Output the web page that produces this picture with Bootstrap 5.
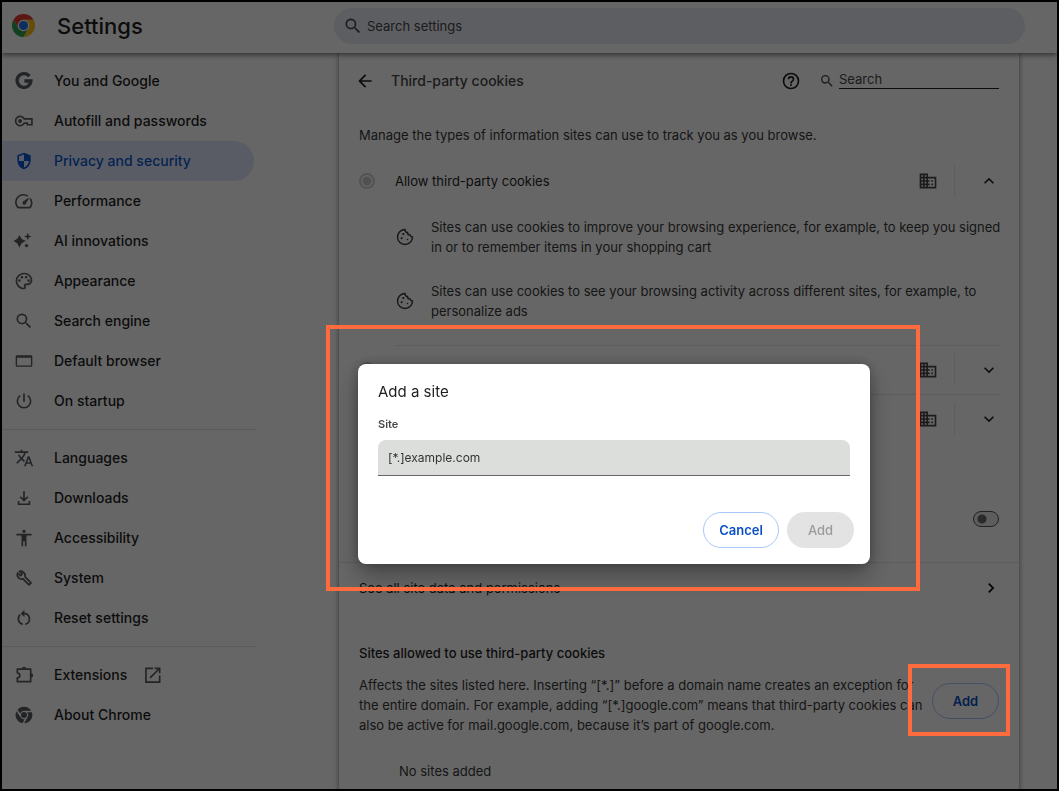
<!DOCTYPE html>
<html lang="en">
<head>
<meta charset="utf-8">
<meta name="viewport" content="width=device-width, initial-scale=1">
<title>Settings - Third-party cookies</title>
<link href="https://cdn.jsdelivr.net/npm/bootstrap@5.3.0/dist/css/bootstrap.min.css" rel="stylesheet">
<style>
  :root { --ink: #1f1f1f; --muted: #474747; --accent: #0b57d0; --rule: #e9e9e9; --mark: #ff6b3d; }
  body { font-family: Inter, "Liberation Sans", sans-serif; font-size: 13px; line-height: 20px; color: var(--ink); }
  svg { display: block; flex: none; fill: currentColor; }
  .ico { width: 20px; height: 20px; }
  .ln { fill: none; stroke: currentColor; stroke-width: 2; }
  .app-frame { border: 2px solid #000; background: #fff; }

  .topbar { height: 51px; padding: 0 32px 4px 10px; z-index: 2; position: relative; box-shadow: 0 2px 5px rgba(0,0,0,.5); background: #fff; }
  .brand-area { width: 322px; gap: 22px; }
  .brand-area h1 { font-size: 22px; line-height: 28px; font-weight: 500; }
  .omni { height: 36px; background: #e9ebf4; padding: 0 9px; gap: 4px; color: var(--muted); }
  .omni input, .mini-search input { font-size: 13px; line-height: 18px; color: inherit; }
  .omni input::placeholder, .mini-search input::placeholder { color: #474747; opacity: 1; }

  .side { width: 254px; padding-top: 8px; }
  .side .nav-link { height: 40px; padding: 0 12px; gap: 20px; font-size: 14px; font-weight: 500; color: var(--ink); border-radius: 0 20px 20px 0; margin-right: 2px; }
  .side .nav-link svg { color: #565a60; }
  .side .nav-link.active, .side .nav-link.active svg { color: var(--accent); }
  .side .nav-link.active { background: #dfe7fb; }
  .side hr { margin: 8px 0; color: #000; opacity: .12; }

  .main-area { padding-left: 83px; padding-right: 38px; }
  .sheet { box-shadow: 0 0 5px rgba(0,0,0,.5); min-height: 100%; }
  .sheet-head { height: 56px; padding: 0 20px 0 16px; }
  .sheet-head h2 { font-size: 14px; line-height: 20px; font-weight: 500; color: #474747; }
  .mini-search { width: 180px; gap: 4px; margin-left: 18px; color: var(--muted); }
  .mini-search input { border-bottom: 1px solid #1f1f1f !important; height: 20px; margin-bottom: 4px; }
  .intro { padding: 16px 20px 12px; color: #373737; }
  .opt { height: 48px; margin: 0 20px; }
  .opt-rule { margin: 0 20px 0 56px; border-top: 1px solid var(--rule); }
  .opt-tail { height: 32px; border-left: 1px solid var(--rule); padding-left: 24px; margin-left: 16px; }
  .opt .form-check-input { width: 16px; height: 16px; margin: 0 20px 0 0; border: 2px solid #d0d0d0; background: none; opacity: 1; }
  .opt .form-check-input:checked { background: radial-gradient(circle, #cacaca 0 4px, transparent 5px); }
  .opt .form-check-input:disabled ~ label { opacity: 1; }
  .opt button, .sheet-head button { border: 0; background: none; padding: 0; color: var(--ink); }
  .opt .ico { color: #474747; }
  .facts { padding: 12px 12px 24px 56px; gap: 24px; color: #373737; }
  .facts li { gap: 16px; }
  .facts .ln { stroke-width: 1.7; }
  .track-row { height: 120px; padding: 32px 20px 0; border-bottom: 1px solid var(--rule); }
  .track-row .form-check-input { width: 26px; height: 16px; margin: 0; float: none; border: 1px solid #555; background: radial-gradient(circle at 8px 7px, #6a6a6a 0 4px, transparent 5px) #e8e8e8; }
  .all-data { height: 50px; padding: 0 18px 0 20px; color: var(--ink); }
  .all-data svg { color: #000; }
  .allowed { padding: 30px 20px 0; }
  .allowed h3 { font-size: 13px; line-height: 20px; font-weight: 500; margin-bottom: 12px; }
  .allowed p { width: 568px; color: #373737; }
  .none-yet { padding: 26px 0 24px 40px; color: #373737; }
  .pill { height: 36px; border-radius: 18px; font-size: 13px; line-height: 20px; font-weight: 600; padding: 0; }
  .pill-line { color: #0b4fc4; border: 1px solid #a8c7fa; background: transparent; }
  .pill-off, .pill-off:disabled { background: #e3e3e3; color: #9b9b9b; border: 0; opacity: 1; font-weight: 500; }
  .w-add { width: 67px; }
  .w-cancel { width: 76px; }

  .dim { position: fixed; inset: 0; z-index: 10; background: rgba(0,0,0,.6); }
  .dialog-spot { position: fixed; z-index: 20; left: 326px; top: 325px; width: 594px; padding: 39px 50px 27px 32px; }
  .dialog-spot::after, .add-spot { content: ""; position: absolute; inset: 0; border: 4px solid var(--mark); pointer-events: none; }
  .add-spot { z-index: 15; inset: -19px -11px -17px -24px; }
  .ask { border-radius: 8px; background: #fff; padding: 18px 16px 16px 20px; box-shadow: 0 12px 24px rgba(0,0,0,.3), 0 0 12px rgba(0,0,0,.25); }
  .ask h2 { font-size: 15px; line-height: 20px; font-weight: 400; margin: 0 0 12px; }
  .ask label { font-size: 11px; line-height: 20px; font-weight: 600; color: #474747; }
  .ask-body { margin-right: 4px; }
  .site-box { height: 36px; padding: 0 10px; border: 0; border-bottom: 1px solid #666; border-radius: 8px 8px 0 0; background: #dcdedb; font-size: 12px; line-height: 20px; margin: 6px 0 36px; }
  .site-box::placeholder { color: #333; opacity: 1; }
</style>
</head>
<body>
<div class="app-frame vh-100 overflow-hidden d-flex flex-column">
  <header class="topbar d-flex align-items-center flex-shrink-0">
    <div class="brand-area d-flex align-items-center flex-shrink-0">
      <svg width="23" height="23" viewBox="0 0 24 24" aria-hidden="true">
        <path fill="#2ba24c" d="M1.6 6A12 12 0 0 0 12 24l5.2-9L12 12 6.8 15Z"/>
        <path fill="#fbc116" d="M17.2 15 12 24A12 12 0 0 0 22.4 6H12Z"/>
        <path fill="#e33b2e" d="M1.6 6A12 12 0 0 1 22.4 6H12L6.8 15Z"/>
        <circle cx="12" cy="12" r="6" fill="#fff"/><circle cx="12" cy="12" r="4.8" fill="#1a73e8"/>
      </svg>
      <h1 class="m-0">Settings</h1>
    </div>
    <div class="omni rounded-pill flex-grow-1 d-flex align-items-center">
      <svg class="ico" viewBox="0 0 24 24"><path d="M15.500 14h-.79l-.28-.27A6.470 6.470 0 0 0 16 9.500 6.500 6.500 0 1 0 9.500 16c1.610 0 3.090-.59 4.230-1.570l.27.28v.79l5 4.990L20.490 19zm-6 0a4.500 4.500 0 1 1 0-9 4.500 4.500 0 0 1 0 9z"/></svg>
      <input type="search" class="border-0 bg-transparent p-0 flex-grow-1" placeholder="Search settings" aria-label="Search settings">
    </div>
  </header>

  <div class="d-flex flex-grow-1">
    <nav class="side nav flex-column flex-nowrap flex-shrink-0" aria-label="Settings sections">
      <a class="nav-link d-flex align-items-center" href="#"><svg class="ico" viewBox="0 0 24 24"><path fill="none" stroke="currentColor" stroke-width="4" d="M18.500 6.200A8.300 8.300 0 1 0 20.300 12H12.500"/></svg>You and Google</a>
      <a class="nav-link d-flex align-items-center" href="#"><svg class="ico" viewBox="0 0 24 24"><path class="ln" d="M12.300 9.500A5.500 5.500 0 1 0 12.300 14.500H16V16.500H21.500V9.500Z"/><circle cx="7.300" cy="12" r="2.300"/></svg>Autofill and passwords</a>
      <a class="nav-link active d-flex align-items-center" href="#" aria-current="page"><svg class="ico" viewBox="0 0 24 24"><path d="M12 2 4 5v6.100c0 5.050 3.410 9.760 8 10.900 4.590-1.140 8-5.850 8-10.900V5zm0 10h6c-.5 3.500-2.800 6.700-6 7.900V12H6V6.400l6-2.250z"/></svg>Privacy and security</a>
      <a class="nav-link d-flex align-items-center" href="#"><svg class="ico" viewBox="0 0 24 24"><path class="ln" d="M5 20A9 9 0 0 1 16.500 6.200M19.300 9A9 9 0 0 1 19 20H5"/><path d="m18.500 7.500-4.500 8.300a2.200 2.200 0 1 1-3.200-3.200z"/></svg>Performance</a>
      <a class="nav-link d-flex align-items-center" href="#"><svg class="ico" viewBox="0 0 24 24"><path d="M6.500 6.500Q8 10.500 12.500 12 8 13.500 6.500 18 5 13.500 .5 12 5 10.500 6.500 6.500Z" stroke="currentColor" stroke-width="1.500"/><path d="m16.500 2 1.200 3.300L21 6.500l-3.300 1.200L16.500 11l-1.200-3.300L12 6.500l3.300-1.200z"/><circle cx="15" cy="17.500" r="2"/></svg>AI innovations</a>
      <a class="nav-link d-flex align-items-center" href="#"><svg class="ico" viewBox="0 0 24 24"><path d="M12 22C6.490 22 2 17.510 2 12S6.490 2 12 2s10 4.040 10 9c0 3.310-2.690 6-6 6h-1.770c-.28 0-.5.22-.5.5 0 .12.05.23.13.33.41.47.64 1.060.64 1.670A2.500 2.500 0 0 1 12 22zm0-18c-4.410 0-8 3.590-8 8s3.590 8 8 8c.28 0 .5-.22.5-.5a.54.54 0 0 0-.14-.35c-.41-.46-.63-1.050-.63-1.650a2.500 2.500 0 0 1 2.500-2.500H16c2.210 0 4-1.790 4-4 0-3.860-3.590-7-8-7z"/><circle cx="6.500" cy="11.500" r="1.500"/><circle cx="9.500" cy="7.500" r="1.500"/><circle cx="14.500" cy="7.500" r="1.500"/><circle cx="17.500" cy="11.500" r="1.500"/></svg>Appearance</a>
      <a class="nav-link d-flex align-items-center" href="#"><svg class="ico" viewBox="0 0 24 24"><path d="M15.500 14h-.79l-.28-.27A6.470 6.470 0 0 0 16 9.500 6.500 6.500 0 1 0 9.500 16c1.610 0 3.090-.59 4.230-1.570l.27.28v.79l5 4.990L20.490 19zm-6 0a4.500 4.500 0 1 1 0-9 4.500 4.500 0 0 1 0 9z"/></svg>Search engine</a>
      <a class="nav-link d-flex align-items-center" href="#"><svg class="ico" viewBox="0 0 24 24"><path fill-rule="evenodd" d="M3.500 5h17A1.500 1.500 0 0 1 22 6.500v11a1.500 1.500 0 0 1-1.500 1.500h-17A1.500 1.500 0 0 1 2 17.500v-11A1.500 1.500 0 0 1 3.500 5zM3.700 8v9.300h16.600V8z"/></svg>Default browser</a>
      <a class="nav-link d-flex align-items-center" href="#"><svg class="ico" viewBox="0 0 24 24"><path class="ln" d="M12 3v10M7.500 5.500a8 8 0 1 0 9 0"/></svg>On startup</a>
      <hr>
      <a class="nav-link d-flex align-items-center" href="#"><svg class="ico" viewBox="0 0 24 24"><path d="M12.870 15.070l-2.540-2.510.03-.03A17.500 17.500 0 0 0 14.070 6H17V4h-7V2H8v2H1v2h11.170C11.500 7.920 10.440 9.750 9 11.350 8.070 10.320 7.300 9.190 6.690 8h-2c.73 1.630 1.730 3.170 2.980 4.560l-5.090 5.020L4 19l5-5 3.110 3.110zM18.500 10h-2L12 22h2l1.120-3h4.750L21 22h2zm-2.620 7 1.620-4.330L19.120 17z"/></svg>Languages</a>
      <a class="nav-link d-flex align-items-center" href="#"><svg class="ico" viewBox="0 0 24 24"><path class="ln" d="M12 4V14.500M7.500 10.500l4.500 4.500 4.500-4.500M5.500 15.500v4h13v-4"/></svg>Downloads</a>
      <a class="nav-link d-flex align-items-center" href="#"><svg class="ico" viewBox="0 0 24 24"><path d="M12 2a2 2 0 1 1 0 4 2 2 0 0 1 0-4zm9 7h-6v13h-2v-6h-2v6H9V9H3V7h18z"/></svg>Accessibility</a>
      <a class="nav-link d-flex align-items-center" href="#"><svg class="ico" viewBox="0 0 24 24"><path class="ln" stroke-linejoin="round" d="M11 4.800A5 5 0 0 0 6.500 4L9.800 7.300 7.800 9.300 4.400 6A5.200 5.200 0 0 0 10.800 13L18 20.300 20.500 17.800 13.300 10.600A5.500 5.500 0 0 0 11 4.800Z"/></svg>System</a>
      <a class="nav-link d-flex align-items-center" href="#"><svg class="ico" viewBox="0 0 24 24"><path class="ln" d="M7.500 8a6.600 6.600 0 0 0 3 11.500M13.500 19.500a6.600 6.600 0 0 0 0-12.800H10"/><path d="M12.500 2.500v8.500L8 6.700z"/></svg>Reset settings</a>
      <hr>
      <a class="nav-link d-flex align-items-center" href="#"><svg class="ico" viewBox="0 0 24 24"><path class="ln" stroke-linejoin="round" d="M4 5H20V20H4V15.500Q7 15 7 12.500T4 9.500Z"/><path d="M9.500 4.500a2.500 2.500 0 0 1 5 0zM20.500 10a2.500 2.500 0 0 1 0 5z"/></svg><span class="d-flex align-items-center gap-3">Extensions<svg class="ico" viewBox="0 0 24 24"><path d="M19 19.500H4.500V5H12V3H2.500v18.500h18.500v-9h-2zM14 3v2h3.590l-9.830 9.830 1.410 1.410L19 6.410V10h2V3z"/></svg></span></a>
      <a class="nav-link d-flex align-items-center" href="#"><svg class="ico" viewBox="0 0 24 24"><circle cx="12" cy="12" r="3.600"/><path d="M12 2a10 10 0 0 1 8.700 5H12a5 5 0 0 0-4.700 3.200L4.200 5.700A10 10 0 0 1 12 2zM3 7.400l4.600 7.100a5 5 0 0 0 5.100 2.400L10.400 21.900A10 10 0 0 1 3 7.400zM21.400 8.600A10 10 0 0 1 12.200 22l4.200-7.500a5 5 0 0 0-.8-5.900z"/></svg>About Chrome</a>
    </nav>

    <main class="main-area flex-grow-1">
      <section class="sheet">
        <div class="sheet-head d-flex align-items-center">
          <button type="button" class="me-3" aria-label="Back"><svg width="20" height="20" viewBox="0 0 24 24"><path d="M20 11H7.830l5.590-5.590L12 4l-8 8 8 8 1.410-1.410L7.830 13H20z"/></svg></button>
          <h2 class="m-0 flex-grow-1">Third-party cookies</h2>
          <button type="button" aria-label="Help"><svg width="20" height="20" viewBox="0 0 24 24"><path d="M11 18h2v-2h-2zm1-16a10 10 0 1 0 0 20 10 10 0 0 0 0-20zm0 18a8 8 0 1 1 0-16 8 8 0 0 1 0 16zm0-14a4 4 0 0 0-4 4h2a2 2 0 1 1 4 0c0 2-3 1.750-3 5h2c0-2.250 3-2.500 3-5a4 4 0 0 0-4-4z"/></svg></button>
          <div class="mini-search d-flex align-items-center">
            <svg width="16" height="16" viewBox="0 0 24 24"><path d="M15.500 14h-.79l-.28-.27A6.470 6.470 0 0 0 16 9.500 6.500 6.500 0 1 0 9.500 16c1.610 0 3.090-.59 4.230-1.570l.27.28v.79l5 4.990L20.490 19zm-6 0a4.500 4.500 0 1 1 0-9 4.500 4.500 0 0 1 0 9z"/></svg>
            <input type="search" class="border-0 bg-transparent p-0 w-100" placeholder="Search" aria-label="Search">
          </div>
        </div>
        <p class="intro m-0">Manage the types of information sites can use to track you as you browse.</p>

        <div class="opt d-flex align-items-center">
          <input class="form-check-input" type="radio" name="cookies" id="allow" checked disabled>
          <label class="flex-grow-1" for="allow">Allow third-party cookies</label>
          <svg class="ico" viewBox="0 0 24 24"><path id="domain" fill-rule="evenodd" d="M12 7V3H2v18h20V7zM6 19H4v-2h2zm0-4H4v-2h2zm0-4H4V9h2zm0-4H4V5h2zm4 12H8v-2h2zm0-4H8v-2h2zm0-4H8V9h2zm0-4H8V5h2zm10 12h-8v-2h2v-2h-2v-2h2v-2h-2V9h8zm-2-8h-2v2h2zm0 4h-2v2h2z"/></svg>
          <div class="opt-tail d-flex align-items-center"><button type="button" aria-label="Collapse"><svg width="20" height="20" viewBox="0 0 24 24"><path d="m12 8-6 6 1.410 1.410L12 10.830l4.590 4.580L18 14z"/></svg></button></div>
        </div>
        <ul class="facts list-unstyled m-0 d-flex flex-column">
          <li class="d-flex align-items-center"><svg class="ico" viewBox="0 0 24 24"><g id="cookie"><path class="ln" d="M12 3A9 9 0 1 0 21 12Q18.500 12 18 9.500 15 9.500 15 6.500 12 6.500 12 3Z"/><circle cx="10" cy="8.500" r="1.300"/><circle cx="8" cy="13.500" r="1.300"/><circle cx="15" cy="15" r="1"/></g></svg><span>Sites can use cookies to improve your browsing experience, for example, to keep you signed in or to remember items in your shopping cart</span></li>
          <li class="d-flex align-items-center"><svg class="ico" viewBox="0 0 24 24"><use href="#cookie"/></svg><span>Sites can use cookies to see your browsing activity across different sites, for example, to personalize ads</span></li>
        </ul>
        <div class="opt-rule"></div>
        <div class="opt d-flex align-items-center">
          <input class="form-check-input" type="radio" name="cookies" aria-label="Second option" disabled>
          <svg class="ico ms-auto" viewBox="0 0 24 24"><use href="#domain"/></svg>
          <div class="opt-tail d-flex align-items-center"><button type="button" aria-label="Expand"><svg width="20" height="20" viewBox="0 0 24 24"><path d="M16.590 8.590 12 13.170 7.410 8.590 6 10l6 6 6-6z"/></svg></button></div>
        </div>
        <div class="opt-rule"></div>
        <div class="opt d-flex align-items-center">
          <input class="form-check-input" type="radio" name="cookies" aria-label="Third option" disabled>
          <svg class="ico ms-auto" viewBox="0 0 24 24"><use href="#domain"/></svg>
          <div class="opt-tail d-flex align-items-center"><button type="button" aria-label="Expand"><svg width="20" height="20" viewBox="0 0 24 24"><path d="M16.590 8.590 12 13.170 7.410 8.590 6 10l6 6 6-6z"/></svg></button></div>
        </div>
        <div class="track-row form-switch d-flex align-items-center justify-content-end">
          <input class="form-check-input" type="checkbox" role="switch" aria-label="Do Not Track">
        </div>
        <a href="#" class="all-data d-flex align-items-center justify-content-between text-decoration-none">See all site data and permissions
          <svg width="20" height="20" viewBox="0 0 24 24"><path d="M8.590 16.590 13.170 12 8.590 7.410 10 6l6 6-6 6z"/></svg></a>

        <div class="allowed">
          <h3>Sites allowed to use third-party cookies</h3>
          <div class="d-flex align-items-start justify-content-between">
            <p class="m-0">Affects the sites listed here. Inserting “[*.]” before a domain name creates an exception for the entire domain. For example, adding “[*.]google.com” means that third-party cookies can also be active for mail.google.com, because it’s part of google.com.</p>
            <div class="position-relative flex-shrink-0 mt-2">
              <button type="button" class="btn pill pill-line w-add d-block">Add</button>
              <div class="add-spot"></div>
            </div>
          </div>
          <div class="none-yet">No sites added</div>
        </div>
      </section>
    </main>
  </div>
</div>

<div class="dim"></div>
<div class="dialog-spot">
  <form class="ask" role="dialog" aria-labelledby="ask-title">
    <div class="ask-body">
      <h2 id="ask-title">Add a site</h2>
      <label for="site" class="d-block">Site</label>
      <input id="site" type="text" class="site-box d-block w-100" placeholder="[*.]example.com">
    </div>
    <div class="d-flex justify-content-end gap-2">
      <button type="button" class="btn pill pill-line w-cancel">Cancel</button>
      <button type="submit" class="btn pill pill-off w-add" disabled>Add</button>
    </div>
  </form>
</div>
<script src="https://cdn.jsdelivr.net/npm/bootstrap@5.3.0/dist/js/bootstrap.bundle.min.js"></script>
</body>
</html>
